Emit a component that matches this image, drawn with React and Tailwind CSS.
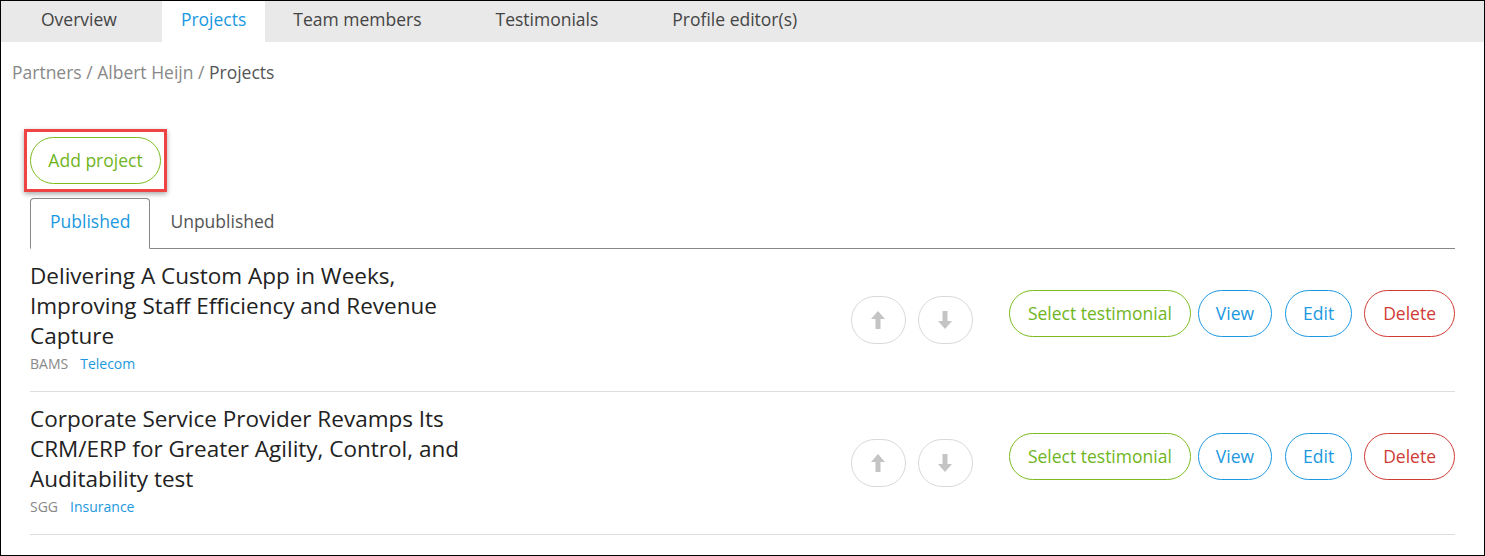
import React from 'react';

const font = { fontFamily: '"Open Sans", "Liberation Sans", sans-serif' };

const projects = [
  {
    id: 1,
    title: 'Delivering A Custom App in Weeks, Improving Staff Efficiency and Revenue Capture',
    client: 'BAMS',
    industry: 'Telecom',
  },
  {
    id: 2,
    title: 'Corporate Service Provider Revamps Its CRM/ERP for Greater Agility, Control, and Auditability test',
    client: 'SGG',
    industry: 'Insurance',
  },
];

const ArrowIcon = ({ down }) => (
  <svg width="14" height="18" viewBox="0 0 14 18" className={down ? 'rotate-180' : ''}>
    <path d="M7 0 L14 8 L9.5 8 L9.5 18 L4.5 18 L4.5 8 L0 8 Z" fill="#c4c4c4" />
  </svg>
);

const ProjectRow = ({ p }) => (
  <div className="flex items-center border-b border-[#dddddd] pt-[12px] pb-[18px]">
    <div className="w-[460px]">
      <h3 className="text-[22.5px] leading-[30px] text-[#222222]">{p.title}</h3>
      <div className="mt-[4px] text-[14px] leading-[18px]">
        <span className="text-[#888888] mr-[12px]">{p.client}</span>
        <span className="text-[#1b98e0]">{p.industry}</span>
      </div>
    </div>
    <div className="flex-1 flex items-center justify-end mt-[-8px]">
      <div className="flex gap-[12px] mt-[14px] mr-[36px]">
        <button className="w-[55px] h-[48px] rounded-full border border-[#d9d9d9] flex items-center justify-center">
          <ArrowIcon />
        </button>
        <button className="w-[55px] h-[48px] rounded-full border border-[#d9d9d9] flex items-center justify-center">
          <ArrowIcon down />
        </button>
      </div>
      <div className="flex gap-[7px] text-[17.5px]">
        <button className="h-[47px] px-[18px] rounded-full border border-[#7cbc1f] text-[#6fb51d]">Select testimonial</button>
        <button className="h-[47px] px-[17px] rounded-full border border-[#1b98e0] text-[#1b98e0]">View</button>
        <button className="h-[47px] px-[17px] rounded-full border border-[#1b98e0] text-[#1b98e0] ml-[6px]">Edit</button>
        <button className="h-[47px] px-[18px] rounded-full border border-[#d03b35] text-[#d03b35] ml-[5px]">Delete</button>
      </div>
    </div>
  </div>
);

export default function App() {
  return (
    <div style={font} className="h-[556px] w-[1485px] border border-black bg-white overflow-hidden">
      {/* top nav */}
      <div className="flex bg-[#e9e9e9] h-[41px] text-[17.5px] leading-[37px] text-[#444444]">
        <div className="pl-[40px] pr-[45px]">Overview</div>
        <div className="px-[19px] bg-white text-[#1b98e0]">Projects</div>
        <div className="pl-[28px] pr-[37px]">Team members</div>
        <div className="pl-[37px] pr-[37px]">Testimonials</div>
        <div className="pl-[37px]">Profile editor(s)</div>
      </div>

      {/* breadcrumb */}
      <div className="pl-[11px] pt-[18px] text-[17.5px] leading-[24px] text-[#888888]">
        Partners / Albert Heijn / <span className="text-[#555555]">Projects</span>
      </div>

      <div className="px-[29px]">
        <div className="mt-[45px] ml-[-6px] inline-block border-[3px] border-[#ef4444] px-[3px] py-[5px] shadow-[0_2px_5px_rgba(0,0,0,0.35)]">
          <button className="h-[47px] w-[131px] rounded-full border border-[#7cbc1f] text-[17.5px] text-[#6fb51d]">Add project</button>
        </div>

        {/* status tabs */}
        <div className="mt-[5px] flex items-end border-b border-[#888888] text-[17.5px]">
          <div className="h-[51px] px-[19px] mb-[-1px] border border-[#888888] border-b-white rounded-t-[4px] bg-white text-[#1b98e0] leading-[45px]">Published</div>
          <div className="h-[51px] px-[20px] text-[#555555] leading-[48px]">Unpublished</div>
        </div>

        {projects.map((p) => (
          <ProjectRow key={p.id} p={p} />
        ))}
      </div>
    </div>
  );
}
